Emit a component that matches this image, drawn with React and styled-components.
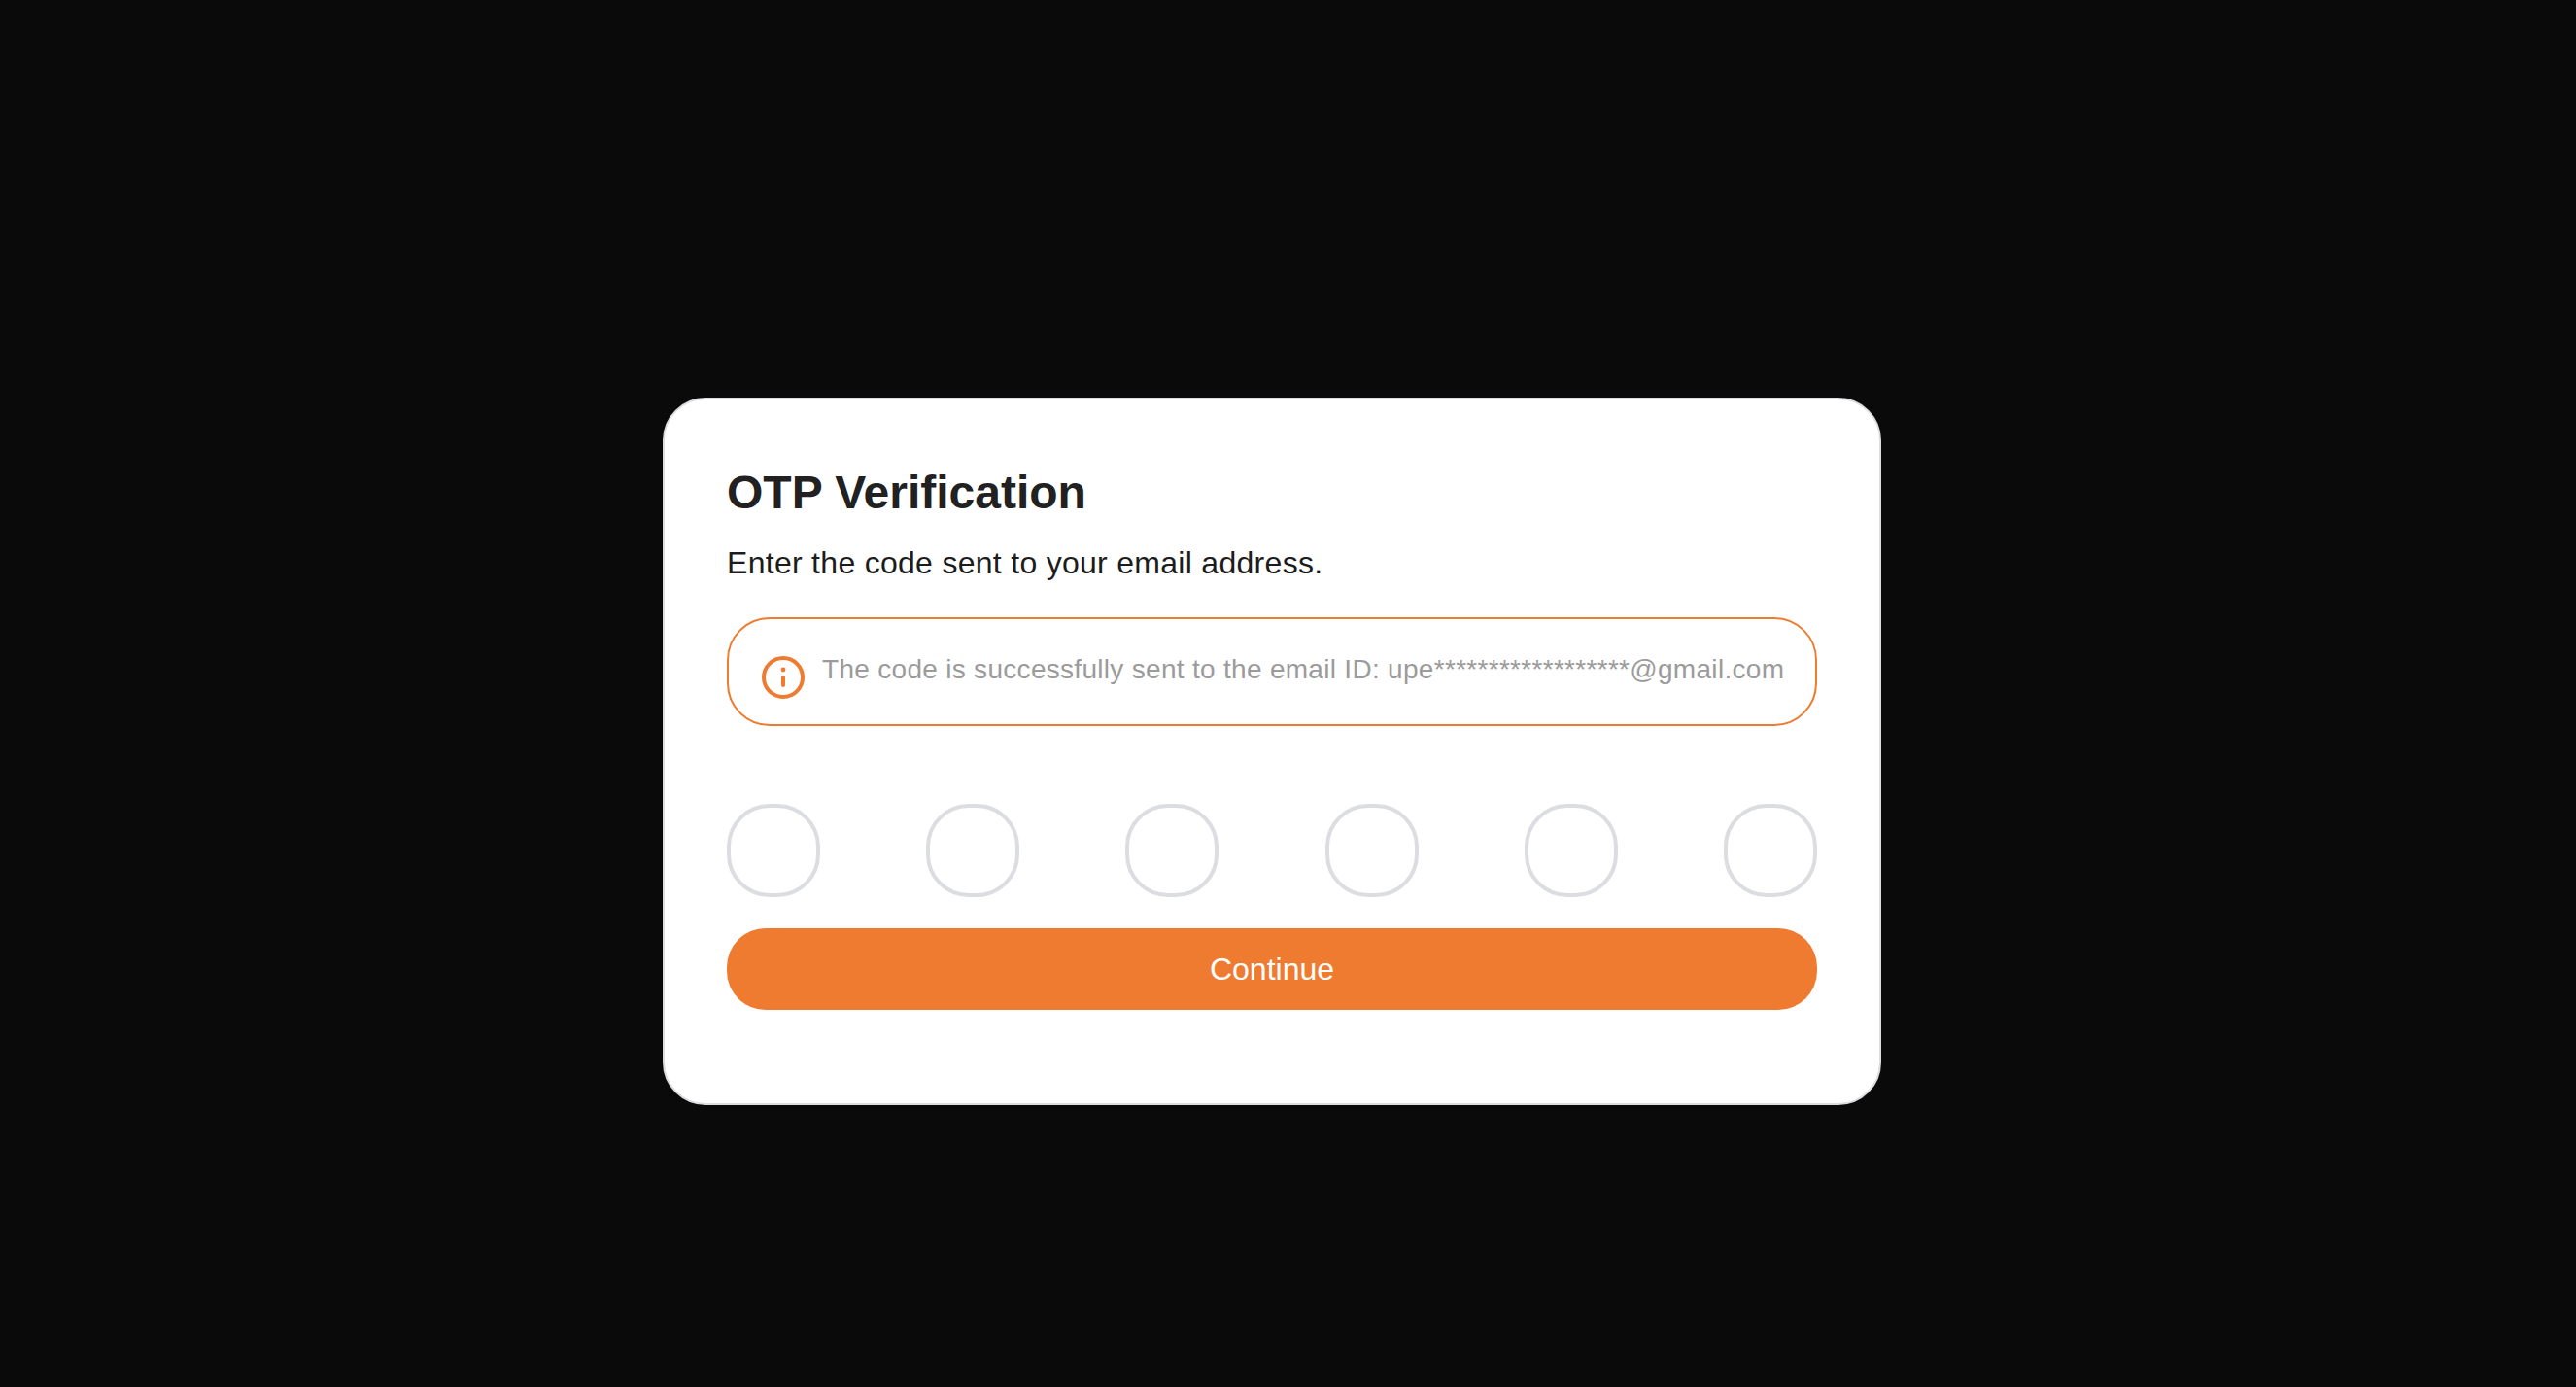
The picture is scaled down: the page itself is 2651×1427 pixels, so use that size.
import React from "react";
import styled, { createGlobalStyle } from "styled-components";

const Global = createGlobalStyle`
  html, body { margin: 0; padding: 0; background: #0a0a0a; }
  * { box-sizing: border-box; }
  body { font-family: "Liberation Sans", Arial, sans-serif; }
`;

const Page = styled.main`
  min-height: 100vh;
  padding: 409px 0 0 682px;
  background: #0a0a0a;
`;

const Card = styled.section`
  width: 1254px;
  height: 728px;
  padding: 68px 64px 0;
  display: flex;
  flex-direction: column;
  background: #fff;
  border: 2px solid #dcdde0;
  border-radius: 44px;
`;

const Title = styled.h1`
  margin: 0;
  font-size: 48px;
  line-height: 56px;
  font-weight: 700;
  color: #212121;
`;

const Subtitle = styled.p`
  margin: 24px 0 0;
  font-size: 32px;
  line-height: 40px;
  letter-spacing: 0.29px;
  color: #1c1c1c;
`;

const Alert = styled.div`
  margin-top: 36px;
  height: 112px;
  padding: 33px 30px 0 34px;
  display: flex;
  align-items: flex-start;
  gap: 18px;
  border: 2px solid #ef7b31;
  border-radius: 44px;
`;

const AlertIcon = styled.svg`
  flex: none;
  width: 44px;
  height: 44px;
  margin-top: 5px;
`;

const AlertText = styled.span`
  font-size: 28px;
  line-height: 38px;
  letter-spacing: 0.3px;
  color: #9b9b9b;
  white-space: nowrap;
`;

const OtpRow = styled.div`
  margin-top: 80px;
  display: flex;
  justify-content: space-between;
`;

const OtpBox = styled.input`
  width: 96px;
  height: 96px;
  padding: 0;
  background: #fff;
  border: 4px solid #dcdde0;
  border-radius: 44px;
  outline: none;
  font: 32px "Liberation Sans", Arial, sans-serif;
  text-align: center;
`;

const Continue = styled.button`
  margin-top: 32px;
  height: 84px;
  border: 0;
  border-radius: 40px;
  background: #ef7b31;
  color: #fff;
  font: 32px/40px "Liberation Sans", Arial, sans-serif;
  cursor: pointer;
`;

export default function App() {
  return (
    <>
      <Global />
      <Page>
        <Card>
          <Title>OTP Verification</Title>
          <Subtitle>Enter the code sent to your email address.</Subtitle>
          <Alert>
            <AlertIcon viewBox="0 0 44 44" fill="none" stroke="#ef7b31" strokeWidth="4" strokeLinecap="round">
              <circle cx="22" cy="22" r="20" />
              <line x1="22" y1="22" x2="22" y2="30" />
              <circle cx="22" cy="14" r="2.4" fill="#ef7b31" stroke="none" />
            </AlertIcon>
            <AlertText>The code is successfully sent to the email ID: upe******************@gmail.com</AlertText>
          </Alert>
          <OtpRow>
            {[0, 1, 2, 3, 4, 5].map((i) => (
              <OtpBox key={i} maxLength={1} aria-label={`Digit ${i + 1}`} />
            ))}
          </OtpRow>
          <Continue type="button">Continue</Continue>
        </Card>
      </Page>
    </>
  );
}
